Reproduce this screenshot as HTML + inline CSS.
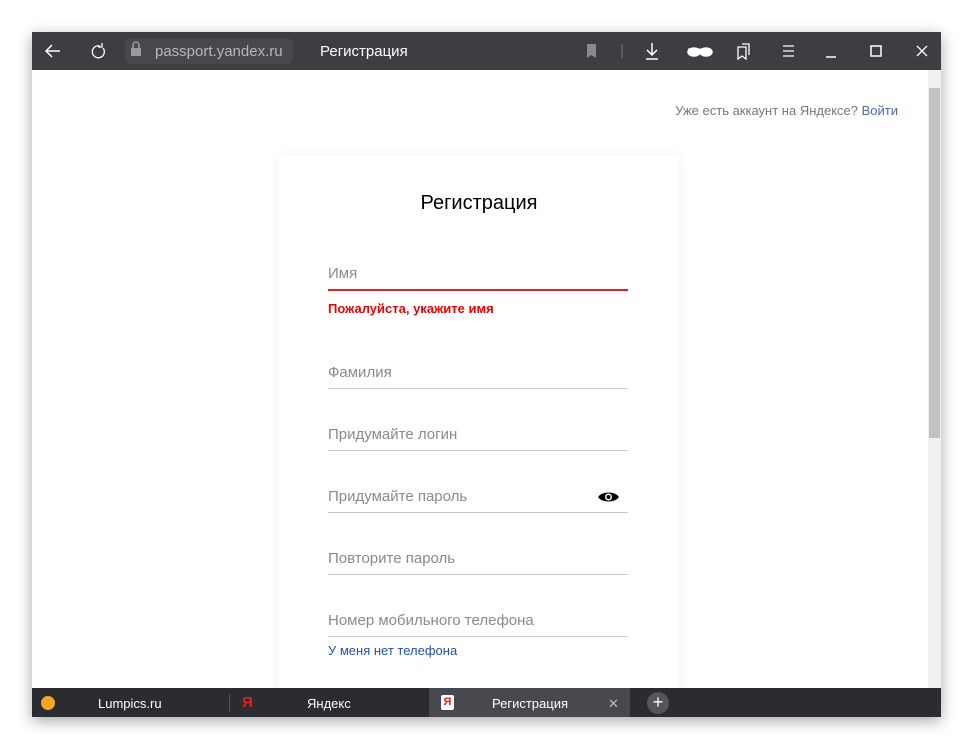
<!DOCTYPE html>
<html><head><meta charset="utf-8"><style>
*{margin:0;padding:0;box-sizing:border-box}
body{width:973px;height:750px;background:#fff;font-family:"Liberation Sans",sans-serif;position:relative;overflow:hidden}
.win{position:absolute;left:32px;top:32px;width:909px;height:685px;background:#fff;box-shadow:0 4px 14px rgba(0,0,0,.35)}
.tb{position:absolute;left:0;top:0;width:909px;height:38px;background:#3d3e43;color:#fff}
.tb .t{position:absolute;top:11px;font-size:15px}
.url{position:absolute;left:93px;top:6px;width:168px;height:26px;background:#47484d;border-radius:6px}
.content{position:absolute;left:0;top:38px;width:896px;height:618px;background:#fff;overflow:hidden}
.sb{position:absolute;left:896px;top:38px;width:13px;height:618px;background:#f0f0f0}
.sb div{position:absolute;left:1px;top:18px;width:11px;height:350px;background:#c1c1c1}
.card{position:absolute;left:247px;top:86px;width:400px;height:560px;background:#fff;box-shadow:0 0 12px rgba(0,0,0,.06)}
.f{position:absolute;left:49px;width:300px;border-bottom:1px solid #c8c8c8;font-size:15px;color:#8a8a8a;height:41px;padding-top:16px}
.tabs{position:absolute;left:0;top:656px;width:909px;height:29px;background:#2b2c30;color:#fff;font-size:13px}
.tabs span{position:absolute;top:8px}
</style></head><body>
<div class="win">
<div class="tb">
<div class="url"></div>
<svg width="909" height="38" style="position:absolute;left:0;top:0" fill="none" stroke="#fff" stroke-width="1.5">
<path d="M28 19H14M20 13l-6 6 6 6"/>
<path d="M68 14a6 6 0 1 0 3 2M70 11v4h-4" stroke-width="1.3"/>
<rect x="99" y="16" width="10" height="8" fill="#9a9a9a" stroke="none"/><path d="M101 16v-3a3 3 0 0 1 6 0v3" stroke="#9a9a9a"/>
<path d="M555 12h9v14l-4.5-3-4.5 3z" fill="#8a8a8a" stroke="none"/>
<path d="M590 12v14" stroke="#666"/>
<path d="M620 11v11M615 18l5 5 5-5M614 27h12"/>
<path d="M656 17h23" stroke-width="1"/><ellipse cx="662" cy="20" rx="6" ry="4" fill="#fff"/><ellipse cx="674" cy="20" rx="6" ry="4" fill="#fff"/>
<path d="M706 15h8v12l-4-3-4 3zM710 12h7v11" stroke-width="1.3"/>
<path d="M751 14h11M751 19h11M751 24h11" stroke-width="1.2"/>
<path d="M794 25h10"/><rect x="839" y="14" width="10" height="10"/><path d="M885 14l10 10M895 14l-10 10" stroke-width="1.3"/>
</svg>
<span class="t" style="left:123px;color:#b8b8b8;font-size:15px">passport.yandex.ru</span>
<span class="t" style="left:288px">Регистрация</span>
</div>
<div class="content">
<div style="position:absolute;right:30px;top:33px;font-size:13px;color:#777">Уже есть аккаунт на Яндексе? <span style="color:#4b6aa8">Войти</span></div>
<div class="card">
<div style="position:absolute;left:0;width:400px;text-align:center;top:36px;font-size:20px;color:#000">Регистрация</div>
<div class="f" style="top:93px;border-bottom:2px solid #e31e1e;height:42px">Имя</div>
<div style="position:absolute;left:49px;top:145px;font-size:13px;font-weight:bold;color:#e00">Пожалуйста, укажите имя</div>
<div class="f" style="top:192px">Фамилия</div>
<div class="f" style="top:254px">Придумайте логин</div>
<div class="f" style="top:316px">Придумайте пароль</div>
<svg style="position:absolute;left:318px;top:334px" width="23" height="14"><path d="M1 7C5 1 18 1 22 7C18 13 5 13 1 7Z" fill="#000"/><circle cx="11.5" cy="7" r="3.5" fill="#fff"/><circle cx="11.5" cy="7" r="2" fill="#000"/></svg>
<div class="f" style="top:378px">Повторите пароль</div>
<div class="f" style="top:440px">Номер мобильного телефона</div>
<div style="position:absolute;left:49px;top:487px;font-size:13px;color:#2450a8">У меня нет телефона</div>
</div>
</div>
<div class="sb"><div></div></div>
<div class="tabs">
<div style="position:absolute;left:9px;top:8px;width:14px;height:14px;border-radius:50%;background:#f5a623"></div>
<span style="left:66px">Lumpics.ru</span>
<div style="position:absolute;left:197px;top:6px;width:1px;height:18px;background:#555"></div>
<span style="left:210px;color:#e8201a;font-weight:bold;top:6px;font-size:15px">Я</span>
<span style="left:275px">Яндекс</span>
<div style="position:absolute;left:397px;top:0;width:201px;height:29px;background:#48494e"></div>
<div style="position:absolute;left:409px;top:7px;width:13px;height:15px;background:#fff;border-radius:2px;color:#e8201a;font-size:11px;font-weight:bold;text-align:center;line-height:15px">Я</div>
<span style="left:460px">Регистрация</span>
<span style="left:576px;color:#bbb">✕</span>
<div style="position:absolute;left:615px;top:4px;width:22px;height:22px;border-radius:50%;background:#55565b;color:#fff;text-align:center;line-height:21px;font-size:18px">+</div>
</div>
</div>
</body></html>
